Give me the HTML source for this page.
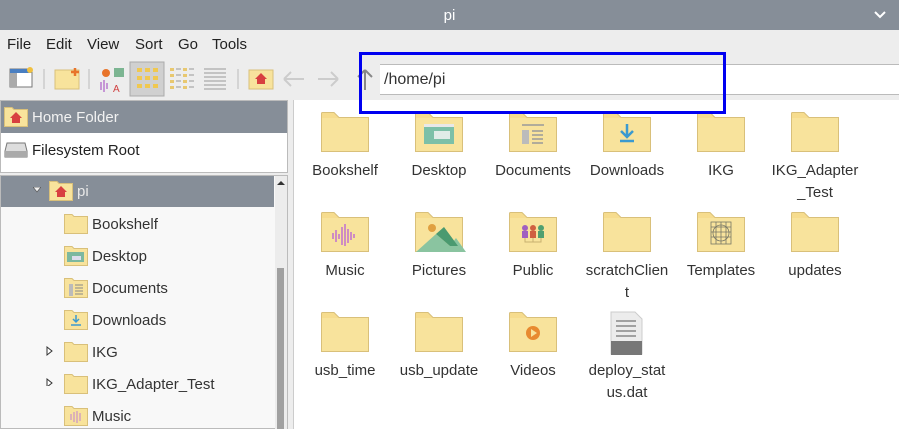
<!DOCTYPE html>
<html><head><meta charset="utf-8"><style>
*{margin:0;padding:0;box-sizing:border-box}
body{width:899px;height:429px;overflow:hidden;background:#ededed;font-family:"Liberation Sans",sans-serif;color:#333;position:relative}
.a{position:absolute}
.title{left:0;top:0;width:899px;height:30px;background:#868e98;color:#fff;font-size:15px;text-align:center;line-height:32px}
.menu span{position:absolute;top:36px;font-size:15px;color:#222}
.lbl{position:absolute;width:94px;text-align:center;font-size:15px;line-height:22px;color:#333}
.tr{position:absolute;font-size:15px;color:#333}
</style></head><body>
<svg width="0" height="0" style="position:absolute"><defs>
<g id="fd"><path d="M0.5 4V1.5Q0.5 0.5 1.5 0.5H13L18 5.5H47.5V39.5H0.5Z" fill="#f6dc8e" stroke="#d9c07a"/><rect x="1" y="6" width="46" height="33" fill="#f8e39c"/></g>
<g id="sf"><path d="M0.5 2V0.5H8L10 2.5H23.5V19.5H0.5Z" fill="#f8e39c" stroke="#d9c07a"/></g>
</defs></svg>
<div class="a title">pi</div>
<svg class="a" style="left:874px;top:11px" width="12" height="8"><path d="M1 1L6 6L11 1" stroke="#fff" stroke-width="2" fill="none"/></svg>
<div class="menu"><span style="left:7px">File</span><span style="left:46px">Edit</span><span style="left:87px">View</span><span style="left:135px">Sort</span><span style="left:178px">Go</span><span style="left:212px">Tools</span></div>
<svg class="a" style="left:0;top:58px" width="380" height="42">
<rect x="10" y="11" width="22" height="18" fill="#fff" stroke="#777"/><rect x="10" y="11" width="22" height="4" fill="#4a7fc1"/><rect x="10" y="15" width="7" height="14" fill="#aaa"/><circle cx="30" cy="12" r="3" fill="#f0c040"/>
<line x1="44" y1="11" x2="44" y2="31" stroke="#bbb"/>
<rect x="55" y="12" width="24" height="19" fill="#f8e39c" stroke="#d9c07a"/><path d="M75 10v8M71 14h8" stroke="#e8742a" stroke-width="2.5"/>
<line x1="89" y1="11" x2="89" y2="31" stroke="#bbb"/>
<circle cx="106" cy="15" r="4" fill="#e8742a"/><rect x="114" y="10" width="10" height="9" fill="#7cb592"/><path d="M101 24v8M104 22v12M107 25v6" stroke="#a040c0"/><text x="113" y="34" font-size="10" fill="#d04040">A</text>
<rect x="130" y="4" width="34" height="34" fill="#d0d0d0" stroke="#aaa"/>
<g fill="#f0c850"><rect x="137" y="10" width="5" height="4"/><rect x="145" y="10" width="5" height="4"/><rect x="153" y="10" width="5" height="4"/><rect x="137" y="18" width="5" height="4"/><rect x="145" y="18" width="5" height="4"/><rect x="153" y="18" width="5" height="4"/><rect x="137" y="26" width="5" height="4"/><rect x="145" y="26" width="5" height="4"/><rect x="153" y="26" width="5" height="4"/></g>
<g fill="#e8c870"><rect x="170" y="10" width="4" height="3"/><rect x="170" y="16" width="4" height="3"/><rect x="170" y="22" width="4" height="3"/><rect x="170" y="28" width="4" height="3"/><rect x="183" y="10" width="4" height="3"/><rect x="183" y="16" width="4" height="3"/><rect x="183" y="22" width="4" height="3"/><rect x="183" y="28" width="4" height="3"/></g>
<g stroke="#999"><path d="M176 11h5M176 17h5M176 23h5M176 29h5M189 11h5M189 17h5M189 23h5M189 29h5"/><path d="M204 11h22M204 15h22M204 19h22M204 23h22M204 27h22M204 31h22"/></g>
<line x1="238" y1="11" x2="238" y2="31" stroke="#bbb"/>
<rect x="249" y="12" width="24" height="19" fill="#f8e39c" stroke="#d9c07a"/><path d="M261 15l-6 6h2v5h8v-5h2z" fill="#d84040"/>
<path d="M284 21h20M284 21l7-7M284 21l7 7" stroke="#ccc" stroke-width="2" fill="none"/>
<path d="M318 21h20M338 21l-7-7M338 21l-7 7" stroke="#ccc" stroke-width="2" fill="none"/>
<path d="M365 32V12M365 12l-7 7M365 12l7 7" stroke="#888" stroke-width="2" fill="none"/>
</svg>
<div class="a" style="left:380px;top:64px;width:519px;height:31px;background:#fff;border-top:1px solid #bbb;border-bottom:1px solid #bbb;font-size:16px;line-height:29px;padding-left:4px;color:#333">/home/pi</div>
<div class="a" style="left:0;top:100px;width:288px;height:73px;background:#fff;border:1px solid #bbb"></div>
<div class="a" style="left:1px;top:101px;width:286px;height:32px;background:#868e98"></div>
<svg class="a" style="left:4px;top:107px" width="24" height="20"><use href="#sf"/><path d="M12 5l-6 6h2v5h8v-5h2z" fill="#d84040"/></svg>
<div class="tr" style="left:32px;top:109px;color:#f2f2f2">Home Folder</div>
<svg class="a" style="left:4px;top:141px" width="24" height="18"><path d="M3 2h18l2 8v6H1v-6z" fill="#ddd" stroke="#777"/><rect x="1" y="10" width="22" height="6" fill="#aaa"/></svg>
<div class="tr" style="left:32px;top:142px;color:#222">Filesystem Root</div>
<div class="a" style="left:0;top:175px;width:288px;height:254px;background:#f8f8f8;border:1px solid #bbb"></div>
<div class="a" style="left:1px;top:176px;width:273px;height:31px;background:#868e98"></div>
<div class="a" style="left:275px;top:176px;width:12px;height:253px;background:#ececec"></div>
<div class="a" style="left:277px;top:268px;width:7px;height:161px;background:#a0a0a0"></div>
<svg class="a" style="left:276px;top:180px" width="10" height="6"><path d="M1 5L5 1L9 5Z" fill="#333"/></svg>
<svg class="a" style="left:33px;top:187px" width="8" height="6"><path d="M0 0H8L4 5Z" fill="#f0f0f0" stroke="#555" stroke-width=".7"/></svg>
<svg class="a" style="left:49px;top:181px" width="24" height="20"><use href="#sf"/><path d="M12 5l-6 6h2v5h8v-5h2z" fill="#d84040"/></svg>
<div class="tr" style="left:77px;top:183px;color:#e8e8e8">pi</div>
<div class="a" style="left:288px;top:100px;width:5px;height:329px;background:#ededed"></div>
<svg class="a" style="left:64px;top:214px" width="220" height="215">
<use href="#sf" y="0"/><use href="#sf" y="32"/><use href="#sf" y="64"/><use href="#sf" y="96"/><use href="#sf" y="128"/><use href="#sf" y="160"/><use href="#sf" y="192"/>
<rect x="3" y="38" width="17" height="10" fill="#7cb8a0"/><rect x="8" y="42" width="9" height="4" fill="#dde"/>
<rect x="5" y="70" width="4" height="12" fill="#bbb"/><path d="M11 71h8M11 74h8M11 77h8M11 80h8" stroke="#888"/>
<path d="M12 101v7M9 105l3 3 3-3M7 111h10" stroke="#3a9ad0" stroke-width="1.5" fill="none"/>
<path d="M7 200v6M10 198v10M13 197v12M16 199v8" stroke="#c080d0"/>
</svg>
<svg class="a" style="left:46px;top:346px" width="8" height="40"><path d="M1 1L6 5L1 9Z" fill="#fff" stroke="#333"/><path d="M1 33L6 37L1 41Z" fill="#fff" stroke="#333"/></svg>
<div class="tr" style="left:92px;top:216px">Bookshelf</div>
<div class="tr" style="left:92px;top:248px">Desktop</div>
<div class="tr" style="left:92px;top:280px">Documents</div>
<div class="tr" style="left:92px;top:312px">Downloads</div>
<div class="tr" style="left:92px;top:344px">IKG</div>
<div class="tr" style="left:92px;top:376px">IKG_Adapter_Test</div>
<div class="tr" style="left:92px;top:408px">Music</div>
<div class="a" style="left:293px;top:100px;width:606px;height:329px;background:#fff;border-left:1px solid #ccc"></div>
<svg class="a" style="left:0;top:0" width="899" height="429">
<use href="#fd" x="321" y="112"/><use href="#fd" x="415" y="112"/><use href="#fd" x="509" y="112"/><use href="#fd" x="603" y="112"/><use href="#fd" x="697" y="112"/><use href="#fd" x="791" y="112"/>
<use href="#fd" x="321" y="212"/><use href="#fd" x="415" y="212"/><use href="#fd" x="509" y="212"/><use href="#fd" x="603" y="212"/><use href="#fd" x="697" y="212"/><use href="#fd" x="791" y="212"/>
<use href="#fd" x="321" y="312"/><use href="#fd" x="415" y="312"/><use href="#fd" x="509" y="312"/>
<rect x="424" y="124" width="30" height="20" fill="#7cc0a8"/><rect x="424" y="124" width="30" height="3" fill="#e8e8e8"/><rect x="434" y="131" width="16" height="8" fill="#e0ece8"/>
<rect x="522" y="130" width="7" height="14" fill="#bbb"/><path d="M522 125h22M532 131h11M532 135h11M532 139h11M532 143h11" stroke="#999" stroke-width="1.5"/>
<path d="M627 124v12M621 131l6 6 6-6M620 141h14" stroke="#3a9ad0" stroke-width="2.5" fill="none"/>
<path d="M333 233v6M336 230v12M339 234v5M342 227v18M345 224v22M348 229v14M351 232v8M354 234v4" stroke="#c070d0" stroke-width="1.5"/>
<circle cx="432" cy="228" r="4" fill="#e0a040"/><path d="M416 252l20-18 14 12 6-8 10 14Z" fill="#8ac4a0"/><path d="M436 234l8-7 14 19h-8z" fill="#4a9a70"/>
<circle cx="525" cy="228" r="3" fill="#a060c0"/><circle cx="533" cy="228" r="3" fill="#d06040"/><circle cx="541" cy="228" r="3" fill="#50a070"/><rect x="522" y="231" width="6" height="7" fill="#a060c0"/><rect x="530" y="231" width="6" height="7" fill="#d06040"/><rect x="538" y="231" width="6" height="7" fill="#50a070"/><path d="M525 238v4h16v-4M533 238v4" stroke="#c8b070" fill="none"/>
<g stroke="#776" stroke-width=".8" fill="none"><rect x="711" y="222" width="20" height="22"/><path d="M711 227h20M711 232h20M711 237h20M716 222v22M721 222v22M726 222v22"/><circle cx="721" cy="233" r="8"/></g>
<circle cx="533" cy="333" r="7" fill="#e88a30"/><path d="M531 329v8l6-4z" fill="#f8e39c"/>
<path d="M611 312h24l7 7v35h-31z" fill="#ececec" stroke="#ccc"/><rect x="611" y="341" width="31" height="14" fill="#777"/><path d="M616 321h20M616 326h20M616 331h20M616 336h20" stroke="#888" stroke-width="1.5"/>
</svg>
<div class="lbl" style="left:298px;top:160px">Bookshelf</div>
<div class="lbl" style="left:392px;top:160px">Desktop</div>
<div class="lbl" style="left:486px;top:160px">Documents</div>
<div class="lbl" style="left:580px;top:160px">Downloads</div>
<div class="lbl" style="left:674px;top:160px">IKG</div>
<div class="lbl" style="left:768px;top:160px">IKG_Adapter<br>_Test</div>
<div class="lbl" style="left:298px;top:260px">Music</div>
<div class="lbl" style="left:392px;top:260px">Pictures</div>
<div class="lbl" style="left:486px;top:260px">Public</div>
<div class="lbl" style="left:580px;top:260px">scratchClien<br>t</div>
<div class="lbl" style="left:674px;top:260px">Templates</div>
<div class="lbl" style="left:768px;top:260px">updates</div>
<div class="lbl" style="left:298px;top:360px">usb_time</div>
<div class="lbl" style="left:392px;top:360px">usb_update</div>
<div class="lbl" style="left:486px;top:360px">Videos</div>
<div class="lbl" style="left:580px;top:360px">deploy_stat<br>us.dat</div>
<div class="a" style="left:359px;top:52px;width:367px;height:62px;border:3px solid #0000f0"></div>
</body></html>
